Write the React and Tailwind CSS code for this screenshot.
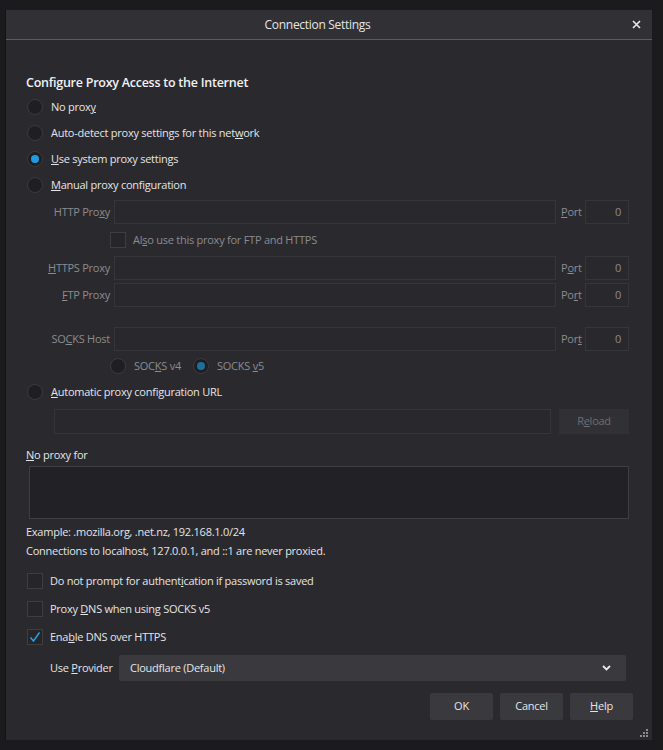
import React from 'react'

const font = { fontFamily: '"Open Sans", "Noto Sans", sans-serif' }

function Radio({ checked, dim }) {
  return (
    <span className="flex h-4 w-4 shrink-0 items-center justify-center rounded-full border border-[#3b3b40] bg-[#1f1f23]">
      {checked && <span className={`h-2 w-2 rounded-full ${dim ? 'bg-[#1f6f9c]' : 'bg-[#1e9be2]'}`} />}
    </span>
  )
}

function Check({ checked }) {
  return (
    <span className="flex h-4 w-4 shrink-0 items-center justify-center border border-[#3d3d42] bg-[#26262a]">
      {checked && (
        <svg width="12" height="12" viewBox="0 0 12 12" fill="none">
          <path d="M1.5 6.5 L4.5 10 L10.5 1.5" stroke="#2ea0e4" strokeWidth="1.4" />
        </svg>
      )}
    </span>
  )
}

function ProxyRow({ label, port, mt }) {
  return (
    <div className={`flex h-[24px] items-center ${mt}`}>
      <span className="w-[83px] whitespace-nowrap pr-[4px] text-right text-[#8b8b90]">{label}</span>
      <div className="h-full flex-1 border border-[#36363a] bg-[#29292d]" />
      <span className="w-[29px] pl-[5px] text-[#8b8b90]">{port}</span>
      <div className="flex h-full w-[44px] items-center justify-end border border-[#36363a] bg-[#29292d] pr-[7px] text-[#8b8b90]">0</div>
    </div>
  )
}

export default function App() {
  return (
    <div className="h-[750px] w-[663px] bg-[#1b1b1e] pl-[5px] pt-[10px] text-[11px] tracking-[-0.25px] text-[#e4e4e7]" style={font}>
      <div className="flex h-[730px] w-[647px] flex-col border-l border-[#141416] bg-[#2a2a2e]">
        <div className="relative flex h-[30px] shrink-0 items-center justify-center border-b border-[#5b5b60] bg-[#313135] pr-[23px] text-[12px] tracking-[-0.3px]">
          Connection Settings
          <svg className="absolute right-[11px] top-[10px]" width="9" height="9" viewBox="0 0 9 9">
            <path d="M1 1 L8 8 M8 1 L1 8" stroke="#e8e8ea" strokeWidth="1.6" />
          </svg>
        </div>

        <div className="flex flex-1 flex-col pl-[20px] pr-[23px]">
          <div className="mt-[34px] flex h-[18px] items-center text-[12.5px] font-semibold text-[#f0f0f2]">
            Configure Proxy Access to the Internet
          </div>

          <div className="mt-[2px] flex h-[26px] items-center gap-[8px] pl-[1px]">
            <Radio />
            <span>No prox<u>y</u></span>
          </div>
          <div className="flex h-[26px] items-center gap-[8px] pl-[1px]">
            <Radio />
            <span>Auto-detect proxy settings for this net<u>w</u>ork</span>
          </div>
          <div className="flex h-[26px] items-center gap-[8px] pl-[1px]">
            <Radio checked />
            <span><u>U</u>se system proxy settings</span>
          </div>
          <div className="flex h-[26px] items-center gap-[8px] pl-[1px]">
            <Radio />
            <span><u>M</u>anual proxy configuration</span>
          </div>

          <div className="pl-[5px]">
            <ProxyRow label={<>HTTP Pro<u>x</u>y</>} port={<><u>P</u>ort</>} mt="mt-[2px]" />
            <div className="flex h-[32px] items-center gap-[7px] pl-[79px] text-[#8b8b90]">
              <Check />
              <span>Al<u>s</u>o use this proxy for FTP and HTTPS</span>
            </div>
            <ProxyRow label={<><u>H</u>TTPS Proxy</>} port={<>P<u>o</u>rt</>} mt="" />
            <ProxyRow label={<><u>F</u>TP Proxy</>} port={<>Po<u>r</u>t</>} mt="mt-[3px]" />
            <ProxyRow label={<>SO<u>C</u>KS Host</>} port={<>Por<u>t</u></>} mt="mt-[20px]" />
            <div className="mt-[3px] flex h-[24px] items-center pl-[79px] text-[#8b8b90]">
              <Radio />
              <span className="ml-[8px] w-[59px]">SOC<u>K</u>S v4</span>
              <Radio checked dim />
              <span className="ml-[8px]">SOCKS <u>v</u>5</span>
            </div>
          </div>

          <div className="mt-[1px] flex h-[26px] items-center gap-[8px] pl-[1px]">
            <Radio />
            <span><u>A</u>utomatic proxy configuration URL</span>
          </div>
          <div className="mt-[4px] flex h-[25px] items-stretch pl-[28px]">
            <div className="flex-1 border border-[#36363a] bg-[#29292d]" />
            <div className="ml-[8px] flex w-[70px] items-center justify-center bg-[#313135] text-[#6e6e73]">
              R<u>e</u>load
            </div>
          </div>

          <div className="mt-[12px] flex h-[18px] items-center">
            <span><u>N</u>o proxy for</span>
          </div>
          <div className="mt-[2px] ml-[3px] h-[53px] border border-[#3e3e43] bg-[#222226]" />

          <div className="mt-[4px] flex h-[18px] items-center">
            Example: .mozilla.org, .net.nz, 192.168.1.0/24
          </div>
          <div className="mt-[1px] flex h-[18px] items-center">
            Connections to localhost, 127.0.0.1, and ::1 are never proxied.
          </div>

          <div className="mt-[7px] flex h-[28px] items-center gap-[7px] pl-[1px]">
            <Check />
            <span>Do not prompt for authent<u>i</u>cation if password is saved</span>
          </div>
          <div className="flex h-[28px] items-center gap-[7px] pl-[1px]">
            <Check />
            <span>Proxy <u>D</u>NS when using SOCKS v5</span>
          </div>
          <div className="flex h-[28px] items-center gap-[7px] pl-[1px]">
            <Check checked />
            <span>Ena<u>b</u>le DNS over HTTPS</span>
          </div>

          <div className="mt-[4px] flex h-[26px] items-center pl-[24px] pr-[3px]">
            <span className="w-[69px] whitespace-nowrap">Use <u>P</u>rovider</span>
            <div className="flex h-full flex-1 items-center justify-between rounded-[2px] bg-[#3a3a3e] pl-[11px] pr-[15px]">
              <span>Cloudflare (Default)</span>
              <svg width="9" height="6" viewBox="0 0 9 6">
                <path d="M1 1 L4.5 4.5 L8 1" stroke="#e8e8ea" strokeWidth="1.8" fill="none" />
              </svg>
            </div>
          </div>

          <div className="mr-[-4px] mt-[12px] flex h-[27px] justify-end gap-[7px]">
            <div className="flex w-[63px] items-center justify-center rounded-[2px] bg-[#3a3a3e]">OK</div>
            <div className="flex w-[63px] items-center justify-center rounded-[2px] bg-[#3a3a3e]">Cancel</div>
            <div className="flex w-[63px] items-center justify-center rounded-[2px] bg-[#3a3a3e]"><span><u>H</u>elp</span></div>
          </div>

          <div className="relative flex-1">
            <svg className="absolute bottom-[3px] right-[-19px]" width="8" height="8" viewBox="0 0 8 8" fill="#8a8a8f">
              <rect x="6" y="0" width="2" height="2" />
              <rect x="3" y="3" width="2" height="2" />
              <rect x="6" y="3" width="2" height="2" />
              <rect x="0" y="6" width="2" height="2" />
              <rect x="3" y="6" width="2" height="2" />
              <rect x="6" y="6" width="2" height="2" />
            </svg>
          </div>
        </div>
      </div>
    </div>
  )
}
